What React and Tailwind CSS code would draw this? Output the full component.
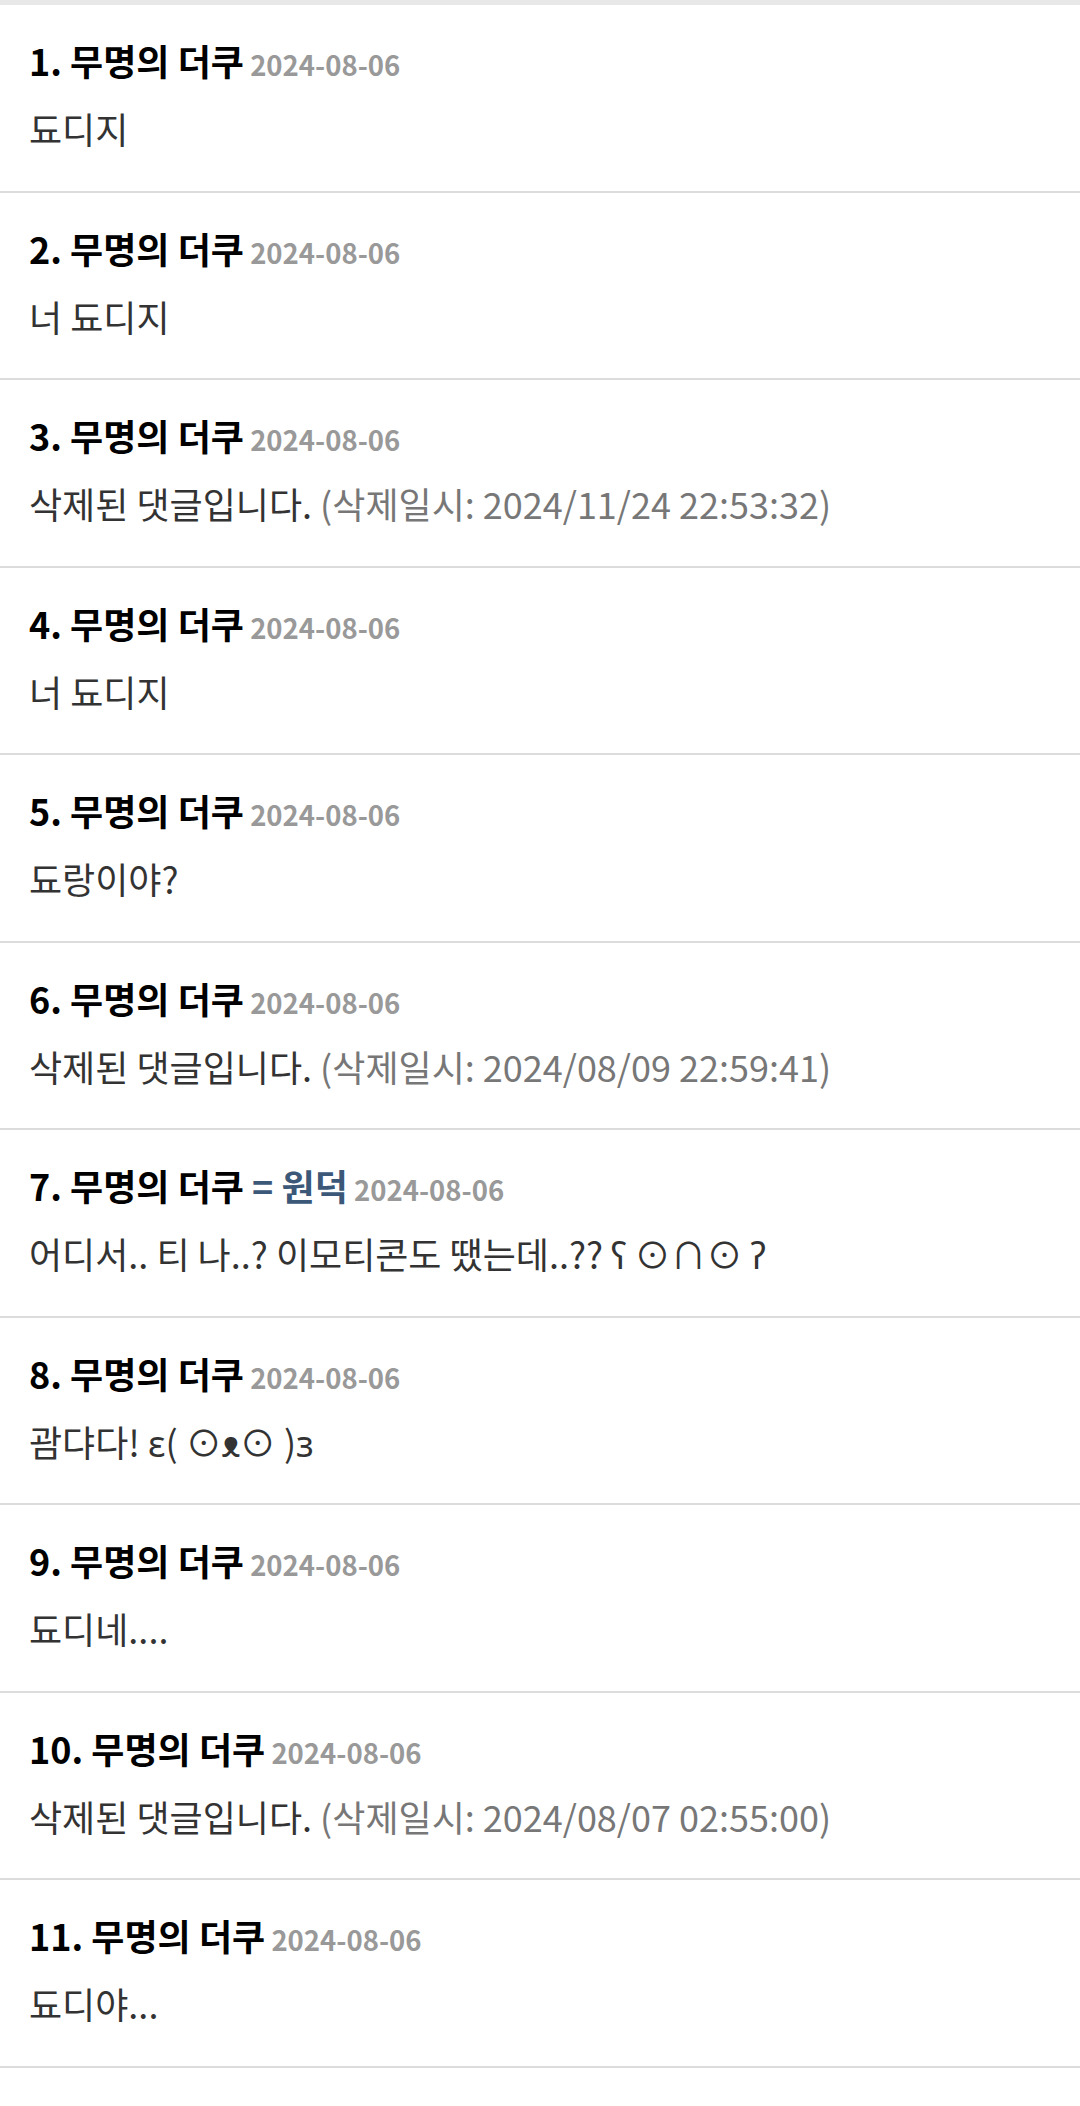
import React from "react";

const rows = [
  { n: 1, body: "됴디지" },
  { n: 2, body: "너 됴디지" },
  { n: 3, deleted: "2024/11/24 22:53:32" },
  { n: 4, body: "너 됴디지" },
  { n: 5, body: "됴랑이야?" },
  { n: 6, deleted: "2024/08/09 22:59:41" },
  { n: 7, body: "어디서.. 티 나..? 이모티콘도 땠는데..?? ʕ ⊙∩⊙ ʔ", alias: "= 원덕" },
  { n: 8, body: "괌댜다! ɛ( ⊙ᴥ⊙ )ɜ" },
  { n: 9, body: "됴디네...." },
  { n: 10, deleted: "2024/08/07 02:55:00" },
  { n: 11, body: "됴디야..." },
];

export default function App() {
  return (
    <div
      className="w-[1080px] min-h-[2106px] bg-white border-t-[5px] border-[#e8e8e8]"
      style={{ fontFamily: '"Noto Sans CJK KR", "Noto Sans", sans-serif' }}
    >
      {rows.map((r) => (
        <div
          key={r.n}
          className="flex flex-col gap-[21px] pl-[29px] pr-[29px] pt-[33px] pb-[38.5px] border-b-2 border-[#dcdcdc]"
        >
          <div className="h-[45px] overflow-visible text-[36px] leading-[45px] font-bold text-black whitespace-nowrap">
            <span>{r.n}. 무명의 더쿠</span>
            {r.alias && <span className="text-[#3b5878]"> {r.alias}</span>}
            <span className="text-[27.5px] text-[#999999]"> 2024-08-06</span>
          </div>
          <div className="h-[48px] text-[36px] leading-[48px] text-[#333333] whitespace-nowrap">
            {r.deleted ? (
              <>
                <span>삭제된 댓글입니다.</span>
                <span className="text-[#777777]"> (삭제일시: {r.deleted})</span>
              </>
            ) : (
              r.body
            )}
          </div>
        </div>
      ))}
    </div>
  );
}
